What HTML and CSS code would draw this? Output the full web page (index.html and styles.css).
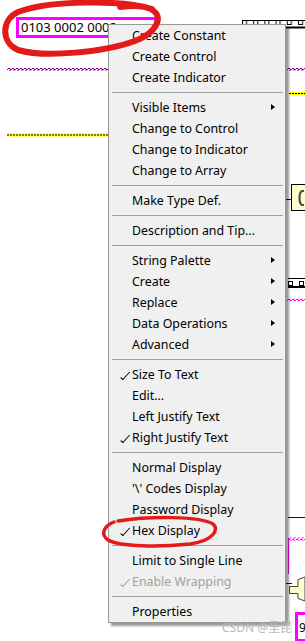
FILE: index.html
```html
<!DOCTYPE html>
<html lang="en">
<head>
    <meta charset="UTF-8">
    <title>String Constant Menu</title>
    <link rel="stylesheet" href="styles.css">
</head>
<body>
    <div class="diagram">
        <!-- block diagram wires and nodes behind the menu -->
        <svg class="wires" width="305" height="641" viewBox="0 0 305 641">
            <defs>
                <pattern id="wave" width="4" height="3" patternUnits="userSpaceOnUse">
                    <path d="M0 2.5 H2 V0.5 H4" fill="none" stroke="#8a008a" stroke-width="1"/>
                </pattern>
                <pattern id="wavePink" width="4" height="3" patternUnits="userSpaceOnUse">
                    <path d="M0 2.5 H2 V0.5 H4" fill="none" stroke="#ff00ff" stroke-width="1"/>
                </pattern>
                <pattern id="strip" x="242" width="11.2" height="10" patternUnits="userSpaceOnUse">
                    <rect x="0.5" y="2.5" width="4" height="4" fill="#fff" stroke="#000"/>
                </pattern>
            </defs>

            <!-- purple string wire -->
            <rect x="7" y="68" width="101" height="3" fill="url(#wave)"/>
            <rect x="287" y="68" width="18" height="3" fill="url(#wave)"/>

            <!-- yellow / black wire -->
            <rect x="7" y="133.5" width="101" height="3" fill="#ffff00"/>
            <line x1="7" y1="135" x2="108" y2="135" stroke="#000" stroke-width="1" stroke-dasharray="2 1"/>
            <rect x="289" y="92" width="16" height="3" fill="#ffff00"/>
            <line x1="289" y1="93.5" x2="305" y2="93.5" stroke="#000" stroke-width="1" stroke-dasharray="2 1"/>

            <!-- array strip top right -->
            <g transform="translate(0 18)">
                <line x1="242" y1="2.5" x2="305" y2="2.5" stroke="#000"/>
                <rect x="242" y="1" width="63" height="9" fill="url(#strip)"/>
                <line x1="242" y1="9.5" x2="305" y2="9.5" stroke="#000" stroke-width="2"/>
            </g>

            <!-- yellow node -->
            <line x1="286" y1="199.5" x2="291" y2="199.5" stroke="#0000cc"/>
            <rect x="291.5" y="184.5" width="16" height="26" fill="#ffffcc" stroke="#000"/>
            <path d="M304 191 H302 C300 192 299.5 194 299.5 198 C299.5 202 300 204 302 205 H304" fill="none" stroke="#505050" stroke-width="2.2"/>

            <!-- second strip -->
            <g transform="translate(0 276)">
                <line x1="288" y1="2.5" x2="305" y2="2.5" stroke="#000"/>
                <rect x="288.5" y="5.5" width="4" height="4" fill="#fff" stroke="#000"/>
                <rect x="299.5" y="5.5" width="4" height="4" fill="#fff" stroke="#000"/>
                <line x1="288" y1="11" x2="305" y2="11" stroke="#000" stroke-width="2"/>
            </g>
            <rect x="287" y="298.5" width="18" height="3" fill="url(#wavePink)"/>

            <!-- lower right -->
            <line x1="288" y1="517.5" x2="305" y2="517.5" stroke="#0000cc"/>
            <rect x="288" y="537.5" width="17" height="3" fill="url(#wavePink)"/>
            <line x1="288.5" y1="538" x2="288.5" y2="574" stroke="#ff00ff"/>
            <line x1="286" y1="583.5" x2="292" y2="583.5" stroke="#0000cc"/>
            <path d="M289.5 586.5 H298 V579.5 L305 577 V601 L298 598.5 V593.5 H289.5 Z" fill="#ffffcc" stroke="#444"/>
        </svg>

        <div class="const-box">0103 0002 0002</div>
        <div class="const-box small">9</div>

        <div class="watermark">CSDN @里昆</div>

        <!-- right-click menu of the string constant -->
        <div class="menu">
            <div class="item">Create Constant</div>
            <div class="item">Create Control</div>
            <div class="item">Create Indicator</div>
            <div class="sep"></div>
            <div class="item sub">Visible Items</div>
            <div class="item">Change to Control</div>
            <div class="item">Change to Indicator</div>
            <div class="item">Change to Array</div>
            <div class="sep"></div>
            <div class="item">Make Type Def.</div>
            <div class="sep"></div>
            <div class="item">Description and Tip...</div>
            <div class="sep"></div>
            <div class="item sub">String Palette</div>
            <div class="item sub">Create</div>
            <div class="item sub">Replace</div>
            <div class="item sub">Data Operations</div>
            <div class="item sub">Advanced</div>
            <div class="sep"></div>
            <div class="item checked">Size To Text</div>
            <div class="item">Edit...</div>
            <div class="item">Left Justify Text</div>
            <div class="item checked">Right Justify Text</div>
            <div class="sep"></div>
            <div class="item">Normal Display</div>
            <div class="item">'\' Codes Display</div>
            <div class="item">Password Display</div>
            <div class="item checked">Hex Display</div>
            <div class="sep"></div>
            <div class="item">Limit to Single Line</div>
            <div class="item checked disabled">Enable Wrapping</div>
            <div class="sep"></div>
            <div class="item">Properties</div>
        </div>

        <!-- red pen marks -->
        <svg class="marks" width="305" height="641" viewBox="0 0 305 641">
            <path d="M152 9 C125 0 50 0 18 12 C2 19 0 42 18 50 C45 58 105 52 135 41 C158 32 166 14 148 8 C140 5 128 6 120 7" fill="none" stroke="#e41a1a" stroke-width="6" stroke-linecap="round"/>
            <path d="M118 521 C150 516 200 516 213 524 C220 530 212 541 190 544 C160 547 120 547 108 540 C100 534 104 526 114 522" fill="none" stroke="#e41a1a" stroke-width="3.5" stroke-linecap="round"/>
        </svg>
    </div>
</body>
</html>
```

FILE: styles.css
```css
body {
    margin: 0;
    background: #fff;
    font-family: 'Noto Sans', 'Noto Sans CJK SC', sans-serif;
    font-size: 13px;
    color: #000;
}

.diagram {
    position: relative;
    width: 305px;
    height: 641px;
    overflow: hidden;
}

.wires,
.marks {
    position: absolute;
    left: 0;
    top: 0;
}

.marks {
    z-index: 3;
    pointer-events: none;
}

.const-box {
    position: absolute;
    z-index: 0;
    left: 16px;
    top: 17px;
    width: 133px;
    height: 15px;
    padding: 0 0 0 2px;
    border: 3px solid #ff00ff;
    background: #fff;
    line-height: 15px;
    white-space: nowrap;
    overflow: hidden;
}

.const-box.small {
    left: 295px;
    top: 612px;
    width: 8px;
    height: 24px;
    padding: 0 0 0 1px;
    border-right: none;
    line-height: 26px;
    font-size: 12px;
}

.watermark {
    position: absolute;
    left: 222px;
    top: 618px;
    font-size: 12px;
    color: rgba(120, 120, 120, 0.55);
    text-shadow: 0 0 1px rgba(255, 255, 255, 0.8);
    z-index: 2;
}

.menu {
    position: absolute;
    left: 108px;
    top: 24px;
    width: 176px;
    background: #f0f0f0;
    border: 1px solid #979797;
    box-shadow: 3px 3px 2px rgba(0, 0, 0, 0.4);
    font-size: 12.4px;
    z-index: 1;
}

.item {
    position: relative;
    height: 21px;
    line-height: 21px;
    padding-left: 23px;
    white-space: nowrap;
}

.item.disabled {
    color: #a0a0a0;
}

.item.checked::before {
    content: "";
    position: absolute;
    left: 10px;
    top: 7px;
    width: 3px;
    height: 8px;
    border-right: 1.5px solid currentColor;
    border-bottom: 1.5px solid currentColor;
    transform: skewX(-18deg) rotate(30deg);
    transform-origin: bottom right;
}

.item.sub::after {
    content: "";
    position: absolute;
    left: 162px;
    top: 7px;
    border-top: 3.5px solid transparent;
    border-bottom: 3.5px solid transparent;
    border-left: 4px solid #000;
}

.sep {
    height: 0;
    margin: 4px 2px 4px 3px;
    border-top: 1px solid #a0a0a0;
}
```
